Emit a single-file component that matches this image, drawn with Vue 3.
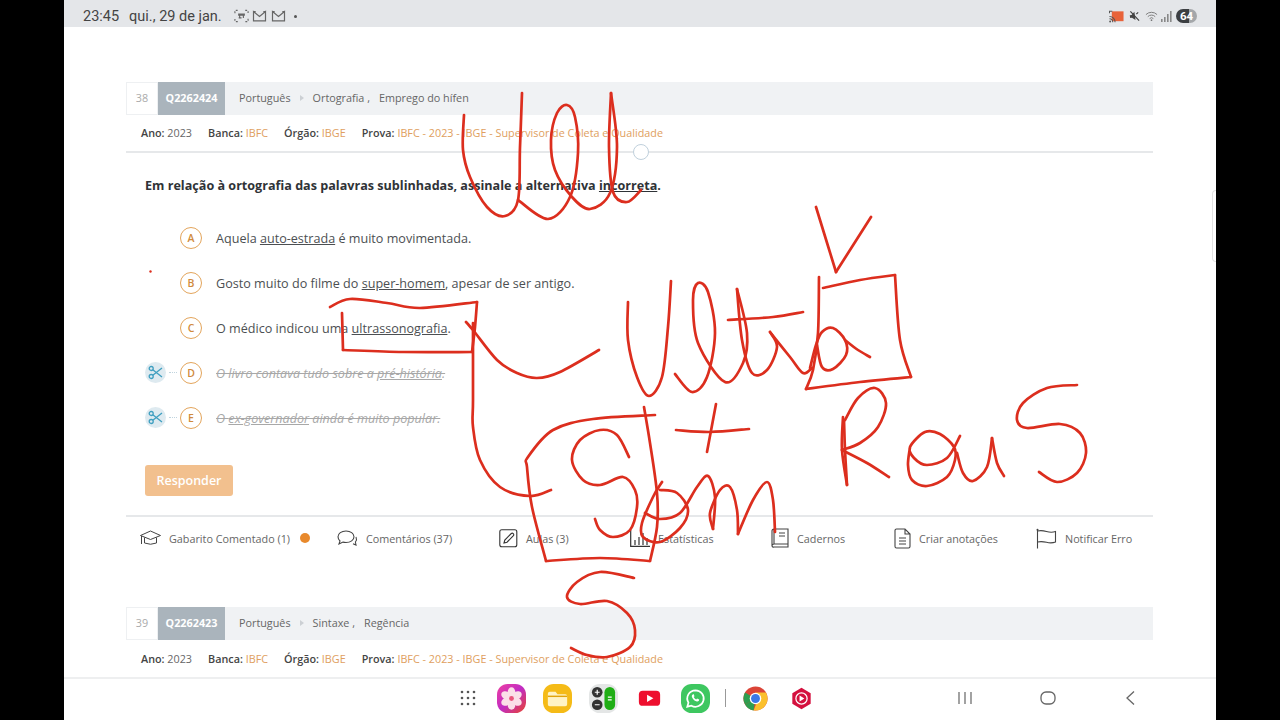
<script setup>
const options = [
  { letter: 'A', before: 'Aquela ', mark: 'auto-estrada', after: ' é muito movimentada.' },
  { letter: 'B', before: 'Gosto muito do filme do ', mark: 'super-homem', after: ', apesar de ser antigo.' },
  { letter: 'C', before: 'O médico indicou uma ', mark: 'ultrassonografia', after: '.' },
  { letter: 'D', before: 'O livro contava tudo sobre a ', mark: 'pré-história', after: '.', cut: true },
  { letter: 'E', before: 'O ', mark: 'ex-governador', after: ' ainda é muito popular.', cut: true },
]

// red pen strokes over the page, as points in screen coordinates
const strokes = [
  [[464,115],[463,150],[470,177],[487,207],[505,216],[518,200],[520,147],[522,93]],
  [[518,200],[548,219],[570,197],[578,153],[575,117],[567,105],[557,113],[551,140],[555,170],[572,197],[590,209],[610,193],[617,147],[611,93]],
  [[611,93],[609,147],[613,192],[627,202],[641,190]],
  [[816,207],[836,272]],
  [[836,272],[871,217]],
  [[628,302],[628,340],[637,377],[649,396],[662,377],[668,327],[671,281]],
  [[675,374],[692,392],[707,377],[715,333],[708,292],[698,283],[693,300],[698,343],[725,382],[743,363],[747,333],[737,289]],
  [[737,289],[742,340],[752,373],[767,370],[777,347],[770,332]],
  [[770,332],[790,357],[803,373],[812,368]],
  [[810,368],[816,345],[822,332],[833,328],[845,340],[846,355],[833,369],[822,367],[817,345]],
  [[845,340],[858,350],[870,357]],
  [[728,320],[773,317],[803,312]],
  [[819,277],[818,333],[813,370],[806,389]],
  [[806,389],[860,382],[911,377]],
  [[911,377],[900,340],[895,275]],
  [[895,275],[860,280],[823,288]],
  [[843,417],[842,450],[847,485]],
  [[847,485],[845,450],[844,420]],
  [[845,420],[858,398],[875,388],[886,403],[878,427],[860,443],[842,450]],
  [[842,450],[867,463],[889,477]],
  [[960,436],[947,458],[927,465],[914,458],[910,447],[925,432],[940,434],[954,447],[955,460],[947,477],[927,486],[912,480],[908,465],[910,447]],
  [[957,453],[963,473],[973,481],[987,467],[992,438]],
  [[992,438],[997,463],[1004,476]],
  [[1077,385],[1047,388],[1023,403],[1017,420],[1027,428],[1060,424],[1080,433],[1086,453],[1077,473],[1057,482],[1039,472]],
  [[676,430],[710,432],[749,429]],
  [[716,404],[707,452]],
  [[655,415],[593,419],[553,430],[528,457],[527,467],[532,507],[546,561]],
  [[546,561],[600,558],[650,561]],
  [[644,407],[650,443],[657,493],[657,527],[650,561]],
  [[466,322],[473,330],[497,360],[517,373],[537,378],[560,372],[599,350]],
  [[473,323],[473,400],[473,427],[480,460],[500,487],[530,496],[551,490]],
  [[330,307],[350,299],[387,303],[420,308],[477,302]],
  [[477,302],[475,327],[472,352]],
  [[472,352],[403,352],[343,350]],
  [[343,350],[342,313]],
  [[629,457],[617,435],[600,430],[580,440],[572,460],[583,480],[600,485],[623,477],[635,490],[637,507],[630,530],[613,537],[600,530],[595,519]],
  [[660,490],[677,493],[688,510],[680,528],[660,542],[643,537],[642,523],[653,497],[662,482]],
  [[645,513],[660,519],[680,513],[697,487],[708,476],[715,497],[713,529]],
  [[713,529],[710,513],[720,490],[730,487],[737,510],[738,534]],
  [[738,534],[753,500],[767,482],[773,500],[775,532]],
  [[634,578],[600,572],[577,582],[567,597],[580,604],[607,601],[627,613],[635,630],[630,647],[607,657],[587,655],[571,648]],
]

// catmull-rom through the points so the ink stays round
const smooth = (pts) => {
  let d = `M${pts[0][0]} ${pts[0][1]}`
  for (let i = 0; i < pts.length - 1; i++) {
    const p0 = pts[i - 1] || pts[i]
    const p1 = pts[i]
    const p2 = pts[i + 1]
    const p3 = pts[i + 2] || p2
    const c1x = p1[0] + (p2[0] - p0[0]) / 6
    const c1y = p1[1] + (p2[1] - p0[1]) / 6
    const c2x = p2[0] - (p3[0] - p1[0]) / 6
    const c2y = p2[1] - (p3[1] - p1[1]) / 6
    d += ` C${c1x.toFixed(1)} ${c1y.toFixed(1)} ${c2x.toFixed(1)} ${c2y.toFixed(1)} ${p2[0]} ${p2[1]}`
  }
  return d
}
const inkPaths = strokes.map(smooth)

const gridDots = []
for (let y = 2; y <= 14; y += 6) for (let x = 2; x <= 14; x += 6) gridDots.push([x, y])
const petals = [0, 60, 120, 180, 240, 300]
</script>

<template>
  <div class="stage">
    <div class="screen">
      <header class="status">
        <span class="clock">23:45</span>
        <span class="date">qui., 29 de jan.</span>
        <svg class="st-ico" width="15" height="14" viewBox="0 0 16 14" fill="none" stroke="#666" stroke-width="1.2">
          <path d="M1 4V2.5A1.5 1.5 0 0 1 2.500 1H4M12 1h1.500A1.500 1.500 0 0 1 15 2.500V4M15 10v1.500a1.500 1.500 0 0 1-1.500 1.500H12M4 13H2.500A1.500 1.500 0 0 1 1 11.500V10" stroke-dasharray="2 1"/>
          <path d="M5 5h6v1H5zM6 9V5M10 9V5M5 9h3"/>
        </svg>
        <svg class="st-ico mail" width="15" height="12" viewBox="0 0 13 11" fill="none" stroke="#666" stroke-width="1.1"><path d="M1 10V1.500L6.500 6 12 1.500V10zM1 1.500h2M12 1.500h-2"/></svg>
        <svg class="st-ico mail" width="15" height="12" viewBox="0 0 13 11" fill="none" stroke="#666" stroke-width="1.1"><path d="M1 10V1.500L6.500 6 12 1.500V10zM1 1.500h2M12 1.500h-2"/></svg>
        <span class="dot"></span>
        <div class="status-right">
          <svg width="15" height="13" viewBox="0 0 16 13">
            <rect x="3" y="1" width="12.500" height="10.500" fill="#e8633a"/>
            <path d="M.5 6.500a6 6 0 0 1 6 6M.5 9a3.500 3.500 0 0 1 3.500 3.500" fill="none" stroke="#555" stroke-width="1.100"/>
            <path d="M.5 3V1h3" fill="none" stroke="#555" stroke-width="1.100"/>
            <circle cx="1.200" cy="11.800" r="1" fill="#555"/>
          </svg>
          <svg width="11" height="12" viewBox="0 0 12 12">
            <path d="M6.500 1.500 3 4.500H1v3h2l3.500 3z" fill="#444" transform="rotate(-8 6 6)"/>
            <path d="M1.500 1 11 11M10 2 8 4" stroke="#444" stroke-width="1.300" fill="none"/>
          </svg>
          <svg class="wifi" width="13" height="12" viewBox="0 0 14 12" fill="none" stroke="#777" stroke-width="1">
            <path d="M1 4.500a8.500 8.500 0 0 1 12 0M3 6.700a5.600 5.600 0 0 1 8 0M5 8.800a2.800 2.800 0 0 1 4 0"/>
            <circle cx="7" cy="10.500" r=".9" fill="#777" stroke="none"/>
          </svg>
          <svg class="signal" width="11" height="11" viewBox="0 0 11 11" fill="#888">
            <rect x="0" y="8" width="1.600" height="3"/><rect x="3" y="6" width="1.600" height="5"/><rect x="6" y="3" width="1.600" height="8"/><rect x="9" y="0" width="1.600" height="11"/>
          </svg>
          <span class="battery">64</span>
        </div>
      </header>

      <main class="content">
        <section class="question">
          <div class="q-head">
            <span class="q-num">38</span>
            <span class="q-code">Q2262424</span>
            <span class="crumb">Português</span>
            <span class="crumb-arrow"></span>
            <span class="crumb">Ortografia ,</span>
            <span class="crumb second">Emprego do hífen</span>
          </div>
          <div class="q-meta">
            <span><b>Ano:</b> 2023</span>
            <span><b>Banca:</b> <i>IBFC</i></span>
            <span><b>Órgão:</b> <i>IBGE</i></span>
            <span><b>Prova:</b> <i>IBFC - 2023 - IBGE - Supervisor de Coleta e Qualidade</i></span>
            <span class="slider-knob"></span>
          </div>

          <p class="q-text">Em relação à ortografia das palavras sublinhadas, assinale a alternativa <u>incorreta</u>.</p>

          <ul class="options">
            <li v-for="opt in options" :key="opt.letter" class="option" :class="{ cut: opt.cut }">
              <span class="scissors">
                <svg v-if="opt.cut" width="15" height="15" viewBox="0 0 15 15" fill="none" stroke="#3f9fc0" stroke-width="1.300">
                  <circle cx="3.200" cy="3.500" r="2"/>
                  <circle cx="3.200" cy="11.500" r="2"/>
                  <path d="M4.800 4.700 14 12M4.800 10.300 14 3"/>
                </svg>
              </span>
              <span class="dots"></span>
              <span class="letter">{{ opt.letter }}</span>
              <span class="opt-text">{{ opt.before }}<u>{{ opt.mark }}</u>{{ opt.after }}</span>
            </li>
          </ul>

          <button class="answer">Responder</button>

          <nav class="actions">
            <a class="action">
              <svg width="21" height="16" viewBox="0 0 21 16" fill="none" stroke="#444" stroke-width="1">
                <path d="M10.500 1 20.500 5.500 10.500 9.500 .5 5.500z"/>
                <path d="M4.500 7.500V13q6 2.500 12 0V7.500M1.500 6v8"/>
              </svg>
              Gabarito Comentado (1)
              <span class="badge"></span>
            </a>
            <a class="action">
              <svg width="21" height="17" viewBox="0 0 21 17" fill="none" stroke="#444" stroke-width="1.100">
                <path d="M9 1c4.500 0 8 2.500 8 5.800s-3.500 5.700-8 5.700c-1 0-2-.1-3-.4L2 14l1-3C1.800 9.900 1 8.500 1 6.800 1 3.500 4.500 1 9 1z"/>
                <path d="M19 7c.8 1.800.6 3.500-.6 5l.6 3-3-1.300"/>
              </svg>
              Comentários (37)
            </a>
            <a class="action">
              <svg width="19" height="19" viewBox="0 0 19 19" fill="none" stroke="#333" stroke-width="1.100">
                <rect x=".8" y=".8" width="17" height="17" rx="2"/>
                <path d="M5 14l.8-3 6.500-6.500a1.500 1.500 0 0 1 2.100 2.100L8 13.200z"/>
              </svg>
              Aulas (3)
            </a>
            <a class="action">
              <svg width="20" height="17" viewBox="0 0 20 17" fill="none" stroke="#333" stroke-width="1.200">
                <path d="M.7 0v16.300H20M5 15V10M9 15V7M13 15V3M17 15V8"/>
              </svg>
              Estatísticas
            </a>
            <a class="action">
              <svg width="18" height="20" viewBox="0 0 18 20" fill="none" stroke="#444" stroke-width="1.100">
                <path d="M3 1h14v15H3a2 2 0 0 0-2 2V3a2 2 0 0 1 2-2zM1 18a1.500 1.500 0 0 0 2 1h14v-3M3 1v15M8 5h6M8 8h6"/>
              </svg>
              Cadernos
            </a>
            <a class="action">
              <svg width="17" height="21" viewBox="0 0 17 21" fill="none" stroke="#444" stroke-width="1.100">
                <path d="M2.500 1H11l5 5v12.500a1.500 1.500 0 0 1-1.500 1.500h-12A1.500 1.500 0 0 1 1 18.500v-16A1.500 1.500 0 0 1 2.500 1zM11 1v5h5M5 10h7M5 13h7M5 16h7"/>
              </svg>
              Criar anotações
            </a>
            <a class="action">
              <svg width="21" height="21" viewBox="0 0 21 21" fill="none" stroke="#444" stroke-width="1.100">
                <path d="M1.500 2v18.500M1.500 3q4-1 9 .5t9 0V14q-4 1.500-9 .3t-9-.3"/>
                <circle cx="1.500" cy="1.800" r="1" fill="#444" stroke="none"/>
              </svg>
              Notificar Erro
            </a>
          </nav>
        </section>

        <section class="question next">
          <div class="q-head">
            <span class="q-num">39</span>
            <span class="q-code">Q2262423</span>
            <span class="crumb">Português</span>
            <span class="crumb-arrow"></span>
            <span class="crumb">Sintaxe ,</span>
            <span class="crumb second">Regência</span>
          </div>
          <div class="q-meta plain">
            <span><b>Ano:</b> 2023</span>
            <span><b>Banca:</b> <i>IBFC</i></span>
            <span><b>Órgão:</b> <i>IBGE</i></span>
            <span><b>Prova:</b> <i>IBFC - 2023 - IBGE - Supervisor de Coleta e Qualidade</i></span>
          </div>
        </section>
      </main>

      <footer class="dock">
        <div class="apps">
          <svg class="app-grid" width="16" height="16" viewBox="0 0 16 16" fill="#555">
            <circle v-for="(p, i) in gridDots" :key="i" :cx="p[0]" :cy="p[1]" r="1.300"/>
          </svg>
          <svg class="app" viewBox="0 0 30 30">
            <defs>
              <linearGradient id="gal" x1="0" y1="0" x2="1" y2="1">
                <stop offset="0" stop-color="#ef3fa0"/><stop offset=".5" stop-color="#c02cc4"/><stop offset="1" stop-color="#e8452c"/>
              </linearGradient>
            </defs>
            <rect width="30" height="30" rx="11" fill="url(#gal)"/>
            <ellipse v-for="a in petals" :key="a" cx="15" cy="8.500" rx="4" ry="5.200" fill="#fbdfe8" :transform="`rotate(${a} 15 15)`"/>
            <circle cx="15" cy="15" r="2.500" fill="#e9557c"/>
          </svg>
          <svg class="app" viewBox="0 0 30 30">
            <rect width="30" height="30" rx="11" fill="#f5bb17"/>
            <path d="M5 10a2 2 0 0 1 2-2h6l2 2.500h8a2 2 0 0 1 2 2V21a2 2 0 0 1-2 2H7a2 2 0 0 1-2-2z" fill="#fff3c4"/>
            <rect x="5" y="12" width="20" height="1.500" fill="#e0a40c"/>
          </svg>
          <svg class="app" viewBox="0 0 30 30">
            <rect width="30" height="30" rx="11" fill="#e4e6e6"/>
            <circle cx="8.500" cy="8.500" r="5.500" fill="#333"/>
            <circle cx="8.500" cy="21.500" r="5.500" fill="#333"/>
            <rect x="16" y="3" width="11" height="24" rx="5.500" fill="#1fae15"/>
            <path d="M6 8.500h5M8.500 6v5M6 21.500h5M19.500 13.500h4M19.500 16.500h4" stroke="#fff" stroke-width="1.200"/>
          </svg>
          <svg class="app" viewBox="0 0 30 30">
            <rect x="4" y="7" width="22" height="15.500" rx="4" fill="#ee0f2e"/>
            <path d="M12.500 11v7.500l6.500-3.750z" fill="#fff"/>
          </svg>
          <svg class="app" viewBox="0 0 30 30">
            <rect width="30" height="30" rx="11" fill="#3ec760"/>
            <path d="M15 6.500a8.500 8.500 0 0 0-7.300 12.800L6.500 23.500l4.300-1.100A8.500 8.500 0 1 0 15 6.500z" fill="none" stroke="#fff" stroke-width="1.800"/>
            <path d="M11.800 11c-.6.600-.8 1.500-.4 2.600.8 2 2.300 3.500 4.400 4.300 1.200.4 2.100.1 2.700-.6l.3-1.200-2.200-1.100-.9 1c-1.100-.5-2-1.400-2.500-2.500l.8-.9-1-2.200z" fill="#fff"/>
          </svg>
          <span class="app-sep"></span>
          <svg class="app" viewBox="0 0 30 30">
            <circle cx="15" cy="15" r="12.500" fill="#db4437"/>
            <path d="M15 15 4.200 21.200A12.500 12.500 0 0 1 4.200 8.800L9.500 12z" fill="#2e9e4f"/>
            <path d="M15 27.500A12.500 12.500 0 0 0 25.800 8.800H15L18 15l-5 12.300z" fill="#fbc02d"/>
            <path d="M15 15 13 27.300A12.500 12.500 0 0 1 4.200 21.200z" fill="#2e9e4f"/>
            <circle cx="15" cy="15" r="6" fill="#fff"/>
            <circle cx="15" cy="15" r="4.600" fill="#3b78e7"/>
          </svg>
          <svg class="app" viewBox="0 0 30 30">
            <path d="M15 4l9.500 5.500v11L15 26l-9.500-5.500v-11z" fill="#d4103e"/>
            <circle cx="15" cy="15" r="5.800" fill="none" stroke="#fff" stroke-width="1.300"/>
            <path d="M13 12v6l5-3z" fill="#fff"/>
          </svg>
        </div>
        <div class="nav-keys">
          <svg width="16" height="14" viewBox="0 0 16 14" stroke="#666" stroke-width="1.200"><path d="M2 1v12M8 1v12M14 1v12"/></svg>
          <svg width="16" height="14" viewBox="0 0 16 14" fill="none" stroke="#666" stroke-width="1.300"><rect x="1" y="1" width="14" height="12" rx="5"/></svg>
          <svg width="16" height="16" viewBox="0 0 16 16" fill="none" stroke="#666" stroke-width="1.300"><path d="M11 1.500 4 8l7 6.500"/></svg>
        </div>
      </footer>

      <span class="edge-handle"></span>
    </div>

    <svg class="ink" viewBox="0 0 1280 720" fill="none" stroke="#dc2e1e" stroke-width="2.700" stroke-linecap="round" stroke-linejoin="round">
      <path v-for="(d, i) in inkPaths" :key="i" :d="d"/>
      <circle cx="150.500" cy="271.500" r="1.200" fill="#dc2e1e" stroke="none"/>
    </svg>
  </div>
</template>

<style scoped>
.stage {
  position: relative;
  width: 1280px;
  height: 720px;
  background: #000;
  display: flex;
  justify-content: center;
  overflow: hidden;
  font-family: "Open Sans", sans-serif;
}

.screen {
  position: relative;
  width: 1152px;
  height: 720px;
  background: #fff;
  display: flex;
  flex-direction: column;
}

.ink {
  position: absolute;
  top: 0;
  left: 0;
  width: 1280px;
  height: 720px;
  pointer-events: none;
}

.status {
  height: 27px;
  flex: none;
  box-sizing: border-box;
  display: flex;
  align-items: center;
  padding: 5px 19px 0;
  background: #e4e6e9;
  color: #444;
  font-family: Roboto, sans-serif;
  font-size: 14.500px;
}

.date {
  margin-left: 10px;
  margin-right: 12px;
}

.st-ico {
  margin-right: 3px;
}

.st-ico.mail {
  margin-right: 4px;
}

.dot {
  width: 3px;
  height: 3px;
  margin-left: 4px;
  border-radius: 50%;
  background: #555;
}

.status-right {
  margin-left: auto;
  display: flex;
  align-items: center;
  gap: 5px;
}

.wifi {
  margin-right: -2px;
}

.signal {
  margin-right: -1px;
}

.battery {
  width: 21px;
  height: 14px;
  border-radius: 7px;
  background: linear-gradient(90deg, #3c3f42 64%, #a4a7aa 64%);
  color: #fff;
  font-size: 11.500px;
  font-weight: 700;
  line-height: 14px;
  text-align: center;
}

.content {
  flex: 1;
  min-height: 0;
  overflow: hidden;
  padding: 55px 63px 0 62px;
}

.q-head {
  height: 33px;
  box-sizing: border-box;
  padding-bottom: 2px;
  display: flex;
  align-items: center;
  background: #f0f2f4;
  color: #666;
  font-size: 10.800px;
}

.q-num {
  width: 32px;
  height: 33px;
  margin-bottom: -2px;
  box-sizing: border-box;
  border: 1px solid #eef0f2;
  background: #fff;
  color: #aaa;
  line-height: 29px;
  text-align: center;
}

.q-code {
  width: 67px;
  height: 33px;
  margin-bottom: -2px;
  background: #aab4bc;
  color: #fff;
  font-weight: 700;
  line-height: 31px;
  text-align: center;
}

.crumb {
  margin-left: 14px;
}

.crumb.second {
  margin-left: 9px;
}

.crumb-arrow {
  width: 0;
  height: 0;
  margin-left: 9px;
  margin-right: -5px;
  border-left: 4px solid #ccd0d4;
  border-top: 3px solid transparent;
  border-bottom: 3px solid transparent;
}

.q-meta {
  position: relative;
  height: 38px;
  box-sizing: border-box;
  display: flex;
  align-items: center;
  gap: 16px;
  padding-left: 15px;
  padding-bottom: 1px;
  border-bottom: 2px solid #e6e8ea;
  color: #666;
  font-size: 10.800px;
}

.q-meta.plain {
  border-bottom: 0;
  height: 37px;
}

.q-meta b {
  color: #444;
  font-weight: 600;
}

.q-meta i {
  color: #e0a060;
  font-style: normal;
}

.slider-knob {
  position: absolute;
  left: 507px;
  bottom: -9px;
  width: 16px;
  height: 16px;
  box-sizing: border-box;
  border: 1px solid #c0d0dc;
  border-radius: 50%;
  background: #fff;
}

.q-text {
  margin: 23px 0 0;
  padding-left: 19px;
  color: #2f3337;
  font-size: 12.600px;
  font-weight: 700;
  line-height: 20px;
}

.options {
  list-style: none;
  margin: 19px 0 0;
  padding: 0 0 0 19px;
}

.option {
  height: 45px;
  display: flex;
  align-items: center;
  color: #4c4f52;
  font-size: 12.600px;
}

.scissors {
  width: 21px;
  height: 21px;
  border-radius: 50%;
  display: flex;
  align-items: center;
  justify-content: center;
}

.cut .scissors {
  background: #deeaf0;
}

.dots {
  width: 14px;
  display: flex;
  justify-content: center;
}

.cut .dots::before {
  content: '';
  width: 8px;
  border-top: 1px dotted #c0d4de;
}

.letter {
  width: 22px;
  height: 22px;
  box-sizing: border-box;
  border: 1px solid #e3a55c;
  border-radius: 50%;
  color: #d08a3c;
  font-size: 10.500px;
  font-weight: 600;
  line-height: 20px;
  text-align: center;
}

.opt-text {
  margin-left: 14px;
  padding-top: 1px;
}

.cut .opt-text {
  color: #a8a8a8;
  font-style: italic;
  text-decoration: line-through;
}

.answer {
  display: block;
  width: 88px;
  height: 31px;
  margin: 25px 0 0 19px;
  padding: 0;
  border: 0;
  border-radius: 3px;
  background: #f2c08e;
  color: #fff;
  font-family: inherit;
  font-size: 12.500px;
  font-weight: 600;
}

.actions {
  display: grid;
  grid-template-columns: 197px 162px 131px 141px 123px 142px 1fr;
  align-items: center;
  height: 46px;
  box-sizing: border-box;
  margin-top: 19px;
  padding-left: 14px;
  padding-bottom: 2px;
  border-top: 2px solid #e6e8ea;
  color: #666;
  font-size: 10.800px;
}

.action {
  display: flex;
  align-items: center;
  gap: 8px;
  white-space: nowrap;
}

.badge {
  width: 10px;
  height: 10px;
  margin-left: 2px;
  border-radius: 50%;
  background: #e8892c;
}

.question.next {
  margin-top: 46px;
}

.dock {
  height: 43px;
  flex: none;
  box-sizing: border-box;
  display: flex;
  align-items: center;
  padding-left: 396px;
  padding-bottom: 3px;
  border-top: 2px solid #eeeff0;
}

.apps {
  display: flex;
  align-items: center;
}

.app-grid {
  margin-right: 21px;
}

.app {
  width: 29px;
  height: 29px;
  margin-right: 17px;
}

.app-sep {
  width: 1px;
  height: 18px;
  margin: 0 15px 0 -2px;
  background: #999;
}

.nav-keys {
  display: flex;
  align-items: center;
  gap: 67px;
  margin-left: 124px;
}

.edge-handle {
  position: absolute;
  top: 190px;
  right: 0;
  width: 4px;
  height: 72px;
  box-sizing: border-box;
  border: 1px solid #e2e2e2;
  border-right: 0;
  border-radius: 4px 0 0 4px;
}
</style>
